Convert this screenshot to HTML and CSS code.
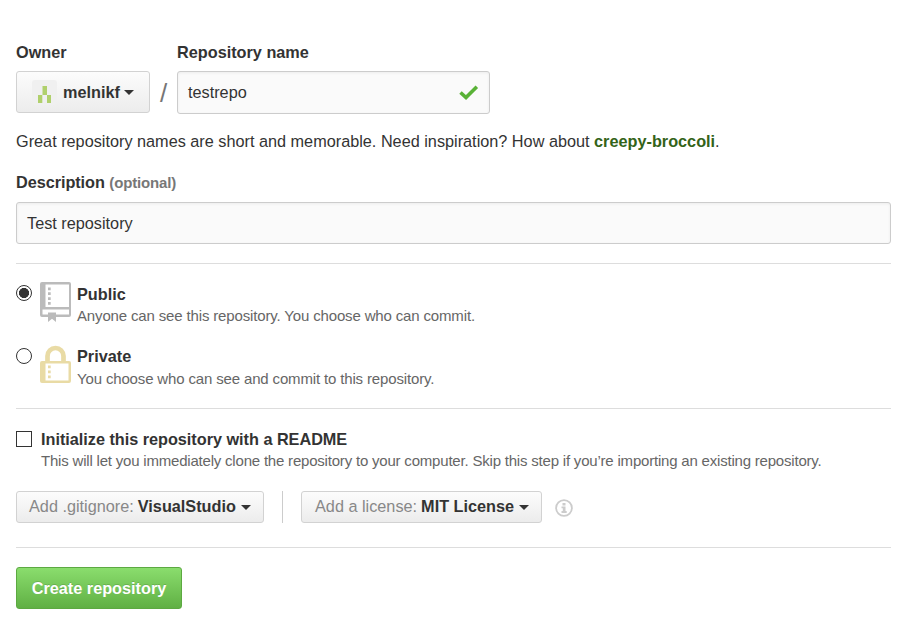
FILE: index.html
```html
<!DOCTYPE html>
<html lang="en">
<head>
<meta charset="utf-8">
<title>Create repository</title>
<link rel="stylesheet" href="styles.css">
</head>
<body>
<main class="form">
  <div class="name-row">
    <div class="field">
      <div class="label">Owner</div>
      <div class="button owner">
        <svg class="avatar" width="25" height="25" viewBox="0 0 25 25"><rect width="25" height="25" rx="3" fill="#f0f0f0"/><path fill="#b0d06c" d="M10.500 6h4.500v9h-4.500zM6 15h4.300v8H6zM15 15h4v8h-4z"/></svg>
        <b class="owner-name">melnikf</b><i class="caret"></i>
      </div>
    </div>
    <span class="slash">/</span>
    <div class="field">
      <div class="label repo-label">Repository name</div>
      <div class="input repo-input"><span class="repo-value">testrepo</span>
        <svg class="check" width="20" height="16" viewBox="0 0 20 16"><path d="M1.500 8.500 7 13.500 17.800 2.800" fill="none" stroke="#59b236" stroke-width="3.600"/></svg>
      </div>
    </div>
  </div>
  <p class="hint"><span class="hint-text">Great repository names are short and memorable. Need inspiration? How about</span> <b class="suggestion">creepy-broccoli</b>.</p>
  <div class="label description-label">Description <span class="optional">(optional)</span></div>
  <div class="input description"><span class="description-value">Test repository</span></div>
  <hr>
  <div class="choice">
    <span class="radio checked"></span>
    <svg class="choice-icon" width="31" height="41" viewBox="0 0 31 41"><path fill="#bbb" fill-rule="evenodd" d="M2 0h27q2 0 2 2v31q0 2-2 2H2q-2 0-2-2V2Q0 0 2 0zM5.500 2.500V25h23.500V2.500zM2.500 27.500v5H29v-5z"/><path fill="#bbb" d="M8 30.500h8V40l-4-3.300L8 40z"/><path fill="#bbb" d="M8 5.500h2.700v2.700H8zM8 10.300h2.700V13H8zM8 15.200h2.700v2.700H8zM8 20h2.700v2.700H8z"/></svg>
    <div><div class="choice-title public">Public</div><div class="note">Anyone can see this repository. You choose who can commit.</div></div>
  </div>
  <div class="choice private-choice">
    <span class="radio"></span>
    <svg class="choice-icon" width="31" height="39" viewBox="0 0 31 39"><path d="M7.500 17V11a8 8 0 0 1 16 0v6" fill="none" stroke="#e9dba5" stroke-width="4.700"/><path fill="#e9dba5" fill-rule="evenodd" d="M2 16h27q2 0 2 2v18q0 2-2 2H2q-2 0-2-2V18q0-2 2-2zM5.500 18.500v17h23v-17z"/><path fill="#e9dba5" d="M8 20.500h2.700v2.700H8zM8 25.500h2.700v2.700H8zM8 30.500h2.700v2.700H8z"/></svg>
    <div><div class="choice-title private-title">Private</div><div class="note private-note">You choose who can see and commit to this repository.</div></div>
  </div>
  <hr class="second-rule">
  <div class="readme">
    <span class="checkbox"></span>
    <div><div class="readme-title">Initialize this repository with a README</div><div class="note readme-note">This will let you immediately clone the repository to your computer. Skip this step if you’re importing an existing repository.</div></div>
  </div>
  <div class="options">
    <div class="button small gitignore"><span class="muted">Add .gitignore:</span><b>VisualStudio</b><i class="caret"></i></div>
    <span class="divider"></span>
    <div class="button small license"><span class="muted">Add a license:</span><b>MIT License</b><i class="caret"></i></div>
    <svg class="info" width="18" height="18" viewBox="0 0 18 18"><circle cx="9" cy="9" r="7.900" fill="none" stroke="#ccc" stroke-width="1.800"/><path fill="#ccc" d="M7.500 4h3v2.500h-3zM6.500 7.500h4V12h1.200v2H6.500v-2h1.300V9.300H6.500z"/></svg>
  </div>
  <hr class="third-rule">
  <div class="submit"><span>Create repository</span></div>
</main>
</body>
</html>
```
FILE: styles.css
```css
* { box-sizing: border-box; }
body {
  margin: 0;
  background: #fff;
  color: #333;
  font: 16.25px/20px "Liberation Sans", Arial, sans-serif;
  white-space: nowrap;
}
.form { width: 905px; height: 633px; padding: 42px 14px 0 16px; overflow: hidden; }
.name-row { display: flex; height: 72px; }
.label { height: 20px; margin-bottom: 9px; font-weight: bold; }
.button {
  display: flex;
  align-items: center;
  border: 1px solid #d2d2d2;
  border-radius: 3px;
  background: linear-gradient(#fcfcfc, #ececec);
}
.owner { width: 134px; height: 42px; padding-left: 15px; }
.avatar { flex: none; }
.owner-name { margin-left: 6px; }
.caret {
  flex: none;
  margin-left: 4px;
  border: 5px solid transparent;
  border-top-color: #333;
  border-bottom: 0;
}
.slash { width: 27px; padding: 41px 0 0 10px; color: #767676; font-size: 26px; }
.input {
  display: flex;
  align-items: center;
  border: 1px solid #ccc;
  border-radius: 3px;
  background: #fafafa;
  box-shadow: inset 0 1px 3px rgba(0, 0, 0, .06);
  padding: 0 10px;
}
.repo-input { width: 313px; height: 43px; padding-bottom: 1px; justify-content: space-between; }
.hint { margin: 17px 0 0; height: 20px; }
.suggestion { color: #336319; }
.description-label { margin: 21px 0 10px; letter-spacing: -.05px; }
.optional { color: #777; font-size: 15px; letter-spacing: -.15px; }
.description { height: 42px; }
hr { margin: 19px 0 0; border: 0; border-top: 1px solid #ddd; }
.choice { display: flex; height: 48px; margin-top: 18px; }
.private-choice { margin-top: 15px; }
.radio {
  flex: none;
  width: 16px;
  height: 16px;
  margin: 3px 8px 0 0;
  border: 1px solid #333;
  border-radius: 50%;
}
.checked { background: radial-gradient(circle, #333 0 4.8px, transparent 5.3px); }
.choice-icon { flex: none; margin-right: 6px; }
.choice-title { font-weight: bold; margin-top: 2px; }
.note { color: #666; font-size: 15px; line-height: 22px; margin-top: 1px; letter-spacing: -.15px; }
.private-title { margin-top: 1px; }
.private-note { margin-top: 2px; }
.second-rule { margin-top: 15px; }
.readme { display: flex; height: 50px; margin-top: 20px; }
.checkbox { flex: none; width: 16px; height: 16px; margin: 2px 9px 0 0; border: 1px solid #333; }
.readme-title { font-weight: bold; letter-spacing: -.02px; }
.readme-note { letter-spacing: -.2px; }
.options { display: flex; height: 32px; margin-top: 12px; align-items: center; }
.small { height: 32px; padding: 0 0 2px 12px; }
.small .caret { margin: 3px 0 0 5px; }
.gitignore { width: 248px; }
.license { width: 241px; padding-left: 13px; }
.muted { color: #888; margin-right: 4px; }
.divider { width: 1px; height: 32px; margin: 0 18px; background: #ccc; }
.info { margin: 1px 0 0 13px; }
.third-rule { margin-top: 24px; }
.submit {
  display: flex;
  align-items: center;
  justify-content: center;
  width: 166px;
  height: 42px;
  margin-top: 19px;
  border: 1px solid #5ca941;
  border-radius: 3px;
  background: linear-gradient(#8add6d, #60b044);
  color: #fff;
  font-weight: bold;
  text-shadow: 0 -1px 0 rgba(0, 0, 0, .15);
}
```
